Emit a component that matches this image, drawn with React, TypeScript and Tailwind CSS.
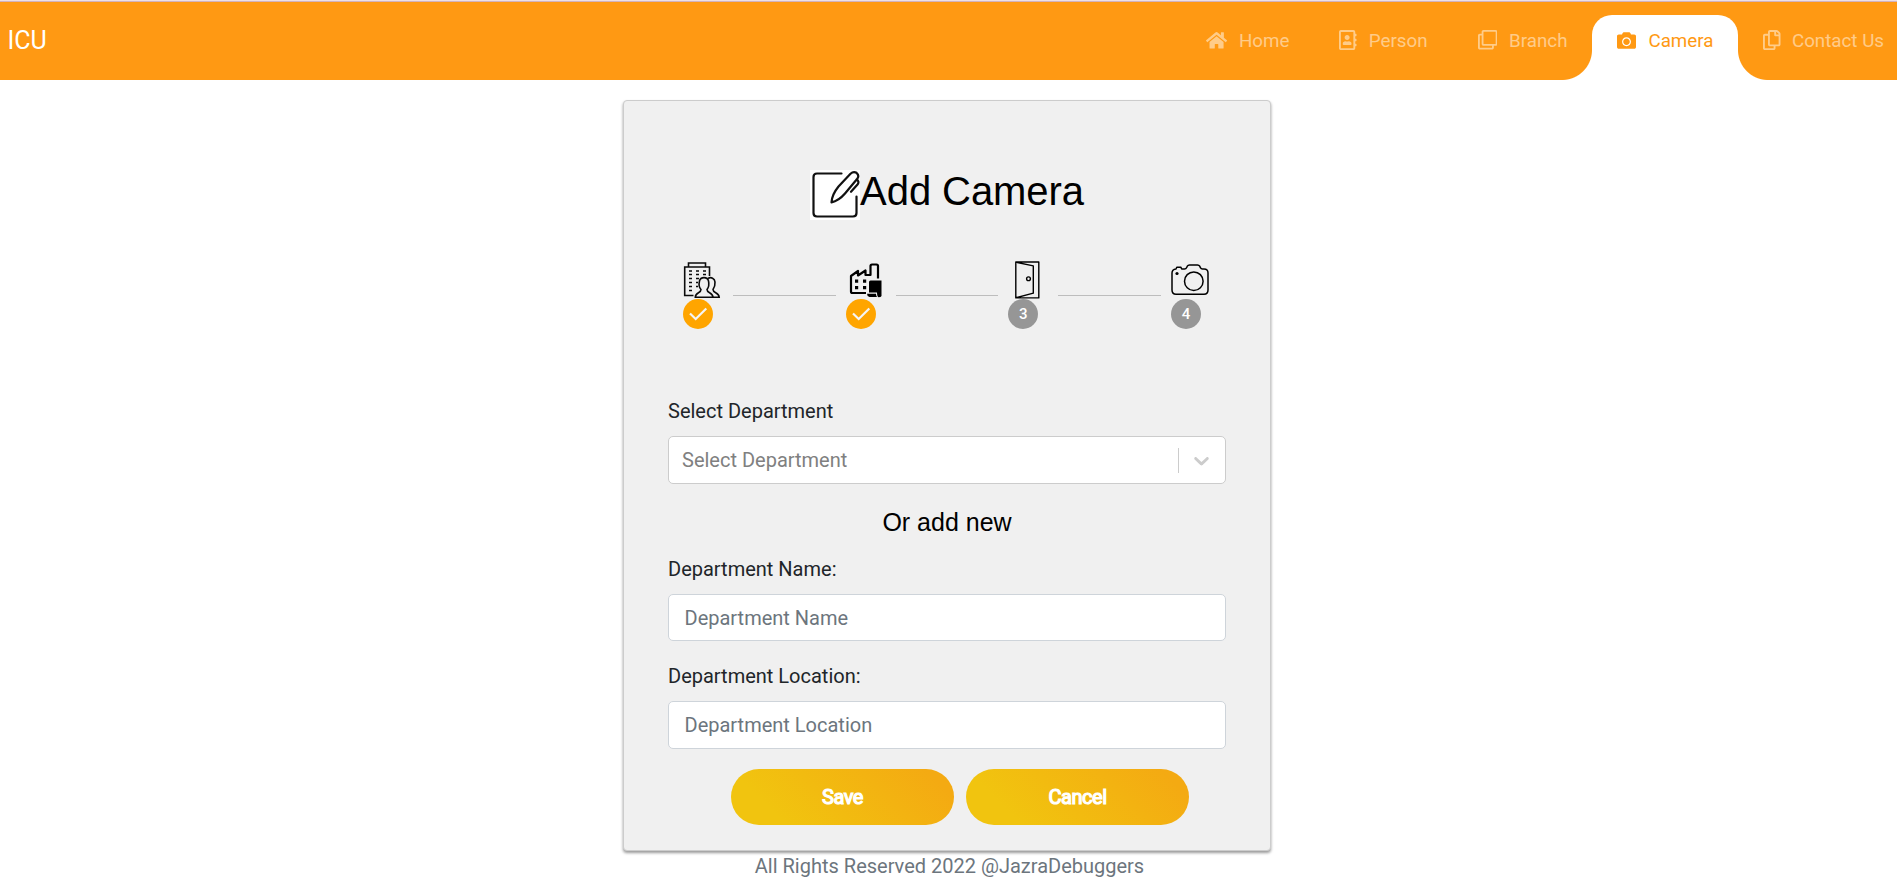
import React from "react";
import { FaHome, FaRegAddressBook, FaRegClone, FaCamera, FaRegCopy } from "react-icons/fa";

function NavItem({ icon, label, last }: { icon: React.ReactNode; label: string; last?: boolean }) {
  return (
    <a className={"flex h-[50px] items-center pl-[25px] text-white/50 " + (last ? "gap-[11px] pr-[13px]" : "gap-[12px] pr-[25px]")}>
      {icon}
      <span className="pt-[2px]">{label}</span>
    </a>
  );
}

function EditIcon() {
  return (
    <svg className="h-[50px] w-[50px] bg-white" viewBox="0 0 50 50" fill="none" stroke="#111" strokeWidth="2.200" strokeLinecap="round" strokeLinejoin="round">
      <path d="M31.500 3.500H7Q3.500 3.500 3.500 7V43Q3.500 46.500 7 46.500H43Q46.500 46.500 46.500 43V26.500" />
      <path d="M21.500 32.300Q22 24.500 28.500 16.500L40.500 3.700Q43.500 0.900 46.500 2.800Q49.500 5.200 47.500 8.500L35 23.500Q28.500 31 21.500 32.300ZM46.500 9.500Q49.800 11.500 47.500 14.500L41 21.800" />
    </svg>
  );
}

function BuildingIcon() {
  return (
    <svg className="h-[38px] w-[38px]" viewBox="0 0 38 38" fill="none" stroke="#0a0a0a" strokeWidth="1.600">
      <path d="M10.500 34.500H1.700V6H5.500V2H22.500V6H26.500V15M5.500 6H22.500" />
      <path d="M6 10H9M13 10H16M20 10H23M6 13.500H9M13 13.500H16M20 13.500H23M6 17.500H9M13 17.500H16M6 21.500H9M13 21.500H15M6 25.500H9M13 25.500H15M6 29.500H9" />
      <path d="M12.300 36.200C12.500 31 18 32.500 18 28.500C16 26.500 15.800 23 16.500 20C17.500 15.500 24.500 15.500 25.500 20C26.200 23 25.500 26.500 24 28.500C24 32.500 29.500 31 30 36.200Z" fill="#f0f0f0" />
      <path d="M25 17.500C28 15.500 31.800 17.500 32 21C32.200 24 31.500 26.500 30 28.500C30 32.500 35.800 31 36.200 36.200H30" />
    </svg>
  );
}

function FactoryIcon() {
  return (
    <svg className="h-[38px] w-[38px]" viewBox="0 0 38 38" fill="none" stroke="#000" strokeWidth="2.200" strokeLinejoin="round">
      <path d="M20 33H6.500Q5 33 5 31.500V16L12 11V15.500L19.500 10.500V15H24.500V6Q24.500 4.500 26 4.500H30.500Q32 4.500 32 6V18.500" />
      <path fill="#000" stroke="none" d="M9 19.500h3.200v3.200H9zM17 19.500h3.200v3.200h-3.200zM9 26h3.200v3.200H9zM17 26h3.200v3.200h-3.200z" />
      <path fill="#000" stroke="none" d="M24.500 20.500H35.500V36Q35 37.200 32.500 37.200Q31 36.500 31 32.500H23V22Q23 20.500 24.500 20.500ZM21 33.800h9q0 2 1 3.200H23.500q-2.500-.5-2.500-3.200z" />
    </svg>
  );
}

function DoorIcon() {
  return (
    <svg className="h-[38px] w-[25px]" viewBox="0 0 25 39" preserveAspectRatio="none" fill="none" stroke="#000" strokeWidth="1.400" strokeLinejoin="round">
      <path d="M.8 1H23.800V37.900H.8ZM.8 1.200L18.300 5V33L.8 37.700" />
      <circle cx="13.500" cy="18.200" r="1.900" />
    </svg>
  );
}

function CameraOutlineIcon() {
  return (
    <svg className="h-[32px] w-[38px]" viewBox="0 0 38 32" fill="none" stroke="#000" strokeWidth="1.500" strokeLinejoin="round">
      <path d="M5 5L5.800 3.200H9.800L10.700 5H13.500Q15 5 15.700 3.500L16.300 2.200Q17 1 18.500 1H26.500Q28 1 28.700 2.200L29.500 3.800Q30 5 31.500 5H33Q37 5 37 9V26Q37 30.200 33 30.200H5Q1 30.200 1 26V9Q1 5.500 5 5Z" />
      <circle cx="22.800" cy="17.200" r="9.300" />
      <circle cx="6" cy="9.500" r="1.600" fill="#000" stroke="none" />
    </svg>
  );
}

function Connector() {
  return <div className="mt-[35px] mr-[10px] ml-[20px] h-px w-[102.700px] shrink-0 bg-[#bdbdbd]" />;
}

function Step({ icon, done, n, pad }: { icon: React.ReactNode; done?: boolean; n: number; pad: string }) {
  return (
    <div className="flex h-[69px] w-[30px] shrink-0 flex-col">
      <div className={"flex h-[39px] w-[40px] shrink-0 items-start " + pad}>{icon}</div>
      {done ? (
        <div className="h-[30px] w-[30px] rounded-full bg-[#ffa500]">
          <svg viewBox="0 0 30 30" fill="none" stroke="#f5f5f5" strokeWidth="2.200">
            <path d="M7 14.500L12.700 20L23.300 9.500" />
          </svg>
        </div>
      ) : (
        <div className="flex h-[30px] w-[30px] items-center justify-center rounded-full bg-[#969696] text-[15px] font-medium text-white">{n}</div>
      )}
    </div>
  );
}

function Field({ label, className }: { label: string; className: string }) {
  return (
    <div>
      <label className="block leading-[30px] text-[#212529]">{label}:</label>
      <input
        placeholder={label}
        className={
          "mt-[10px] block w-full rounded-[5px] border border-[#ced4da] bg-white px-[15.500px] text-[20px] placeholder:text-[#6c757d] placeholder:opacity-100 " +
          className
        }
      />
    </div>
  );
}

const buttonClass =
  "h-[56px] w-[223px] rounded-[28px] bg-[linear-gradient(45deg,#f1c40f_10%,#f1c40f_20%,#f4aa12_90%)] pb-px text-[20px] font-normal tracking-[-0.450px] text-white [-webkit-text-stroke:1.200px_white]";

export default function App() {
  return (
    <div className="h-[889px] w-full overflow-hidden bg-white font-['Roboto',sans-serif] text-[20px]">
      <div className="h-px bg-[#eedfe7]" />
      <nav className="flex h-[79px] items-start justify-between border-t border-[#d3b3bd] bg-[#ff9913]">
        <span className="pt-[20px] pl-[7.500px] text-[25px] leading-[38px] text-white">ICU</span>
        <div className="flex pt-[13px] text-[18.750px]">
          <NavItem icon={<FaHome className="h-[18.750px] w-[21.100px]" />} label="Home" />
          <NavItem icon={<FaRegAddressBook className="h-[20px] w-[17.500px]" />} label="Person" />
          <NavItem icon={<FaRegClone className="h-[19.500px] w-[19.500px]" />} label="Branch" />
          <div className="relative flex h-[65px] w-[146px] items-start rounded-t-[20px] bg-white">
            <span className="absolute bottom-0 -left-[30px] h-[30px] w-[30px] bg-[radial-gradient(circle_at_0_0,transparent_29.500px,white_30.500px)]" />
            <a className="flex h-[50px] items-center gap-[12px] pl-[25px] text-[#ff9913]">
              <FaCamera className="h-[19px] w-[19px]" />
              <span className="pt-[2px]">Camera</span>
            </a>
            <span className="absolute -right-[30px] bottom-0 h-[30px] w-[30px] bg-[radial-gradient(circle_at_100%_0,transparent_29.500px,white_30.500px)]" />
          </div>
          <NavItem icon={<FaRegCopy className="h-[20px] w-[17.500px]" />} label="Contact Us" last />
        </div>
      </nav>

      <div className="pt-[20px] pr-[3px]">
        <main className="mx-auto h-[751px] w-[648px] rounded-[4px] border border-[#ccc] bg-[#f0f0f0] px-[44px] pt-[69px] shadow-[0_2px_3px_rgba(0,0,0,0.4)]">
          <h1 className="flex h-[50px] justify-center font-['Liberation_Sans',sans-serif] text-[40px] leading-[42px] text-black">
            <EditIcon />
            <span className="tracking-[-0.080px]">Add Camera</span>
          </h1>

          <div className="mt-[40px] flex pl-[15px]">
            <Step n={1} done pad="pt-[1px]" icon={<BuildingIcon />} />
            <Connector />
            <Step n={2} done pad="" icon={<FactoryIcon />} />
            <Connector />
            <Step n={3} pad="pl-[7px] pt-[1px]" icon={<DoorIcon />} />
            <Connector />
            <Step n={4} pad="pt-[4px]" icon={<CameraOutlineIcon />} />
          </div>

          <label className="mt-[67px] block leading-[30px] text-[#212529]">Select Department</label>
          <div className="mt-[10px] flex h-[48px] items-center rounded-[5px] border border-[#ccc] bg-white pl-[13px]">
            <span className="grow text-[#808080]">Select Department</span>
            <span className="h-[25px] w-px bg-[#ccc]" />
            <span className="flex w-[46px] justify-center pr-[2px]">
              <svg className="h-[25px] w-[25px]" viewBox="0 0 20 20" fill="#ccc">
                <path d="M4.516 7.548c0.436-0.446 1.043-0.481 1.576 0l3.908 3.747 3.908-3.747c0.533-0.481 1.141-0.446 1.574 0 0.436 0.445 0.408 1.197 0 1.615-0.406 0.418-4.695 4.502-4.695 4.502-0.217 0.223-0.502 0.335-0.787 0.335s-0.570-0.112-0.789-0.335c0 0-4.287-4.084-4.695-4.502s-0.436-1.170 0-1.615z" />
              </svg>
            </span>
          </div>
          <h2 className="mt-[23px] text-center font-['Liberation_Sans',sans-serif] text-[25px] leading-[30px] text-black">Or add new</h2>

          <div className="mt-[17px] flex flex-col gap-[20px]">
            <Field label="Department Name" className="h-[47px]" />
            <Field label="Department Location" className="h-[48px]" />
          </div>

          <div className="mt-[20px] flex gap-[12px] pl-[63px]">
            <button className={buttonClass}>Save</button>
            <button className={buttonClass}>Cancel</button>
          </div>
        </main>
      </div>
      <footer className="pl-[2px] text-center leading-[30px] text-[#6c757d]">All Rights Reserved 2022 @JazraDebuggers</footer>
    </div>
  );
}
